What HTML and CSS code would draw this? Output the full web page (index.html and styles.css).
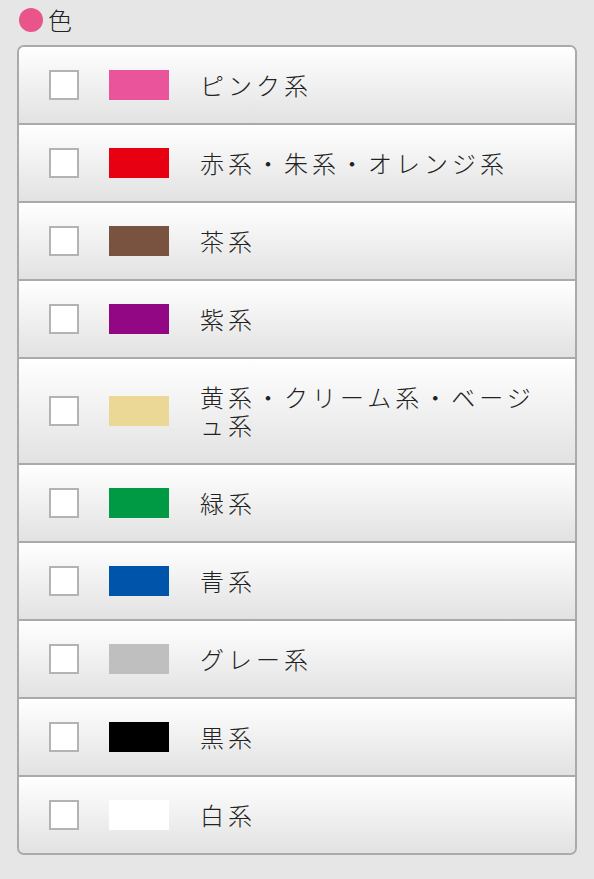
FILE: index.html
```html
<!DOCTYPE html>
<html lang="ja">
<head>
<meta charset="utf-8">
<link rel="stylesheet" href="styles.css">
</head>
<body>
<div class="head"><span class="dot"></span><span class="title">色</span></div>
<ul class="list">
  <li class="row"><span class="cb"></span><span class="sw" style="background:#e9549a"></span><span class="label">ピンク系</span></li>
  <li class="row"><span class="cb"></span><span class="sw" style="background:#e60012"></span><span class="label">赤系・朱系・オレンジ系</span></li>
  <li class="row"><span class="cb"></span><span class="sw" style="background:#7a5340"></span><span class="label">茶系</span></li>
  <li class="row"><span class="cb"></span><span class="sw" style="background:#920783"></span><span class="label">紫系</span></li>
  <li class="row"><span class="cb"></span><span class="sw" style="background:#ecd896"></span><span class="label">黄系・クリーム系・ベージュ系</span></li>
  <li class="row"><span class="cb"></span><span class="sw" style="background:#009944"></span><span class="label">緑系</span></li>
  <li class="row"><span class="cb"></span><span class="sw" style="background:#0055aa"></span><span class="label">青系</span></li>
  <li class="row"><span class="cb"></span><span class="sw" style="background:#bfbfbf"></span><span class="label">グレー系</span></li>
  <li class="row"><span class="cb"></span><span class="sw" style="background:#000000"></span><span class="label">黒系</span></li>
  <li class="row"><span class="cb"></span><span class="sw" style="background:#ffffff"></span><span class="label">白系</span></li>
</ul>
</body>
</html>
```
FILE: styles.css
```css
html, body {
  margin: 0;
  padding: 0;
  background: #e6e6e6;
}
body {
  padding: 8px 17px 0 17px;
  font-family: "Noto Sans CJK JP", "Noto Sans", sans-serif;
  color: #222;
}
.head {
  display: flex;
  align-items: center;
  height: 24px;
  margin-bottom: 13px;
}
.dot {
  width: 24px;
  height: 24px;
  border-radius: 50%;
  background: #e9558a;
  margin-left: 2px;
  margin-right: 5px;
}
.title {
  font-size: 24px;
  line-height: 24px;
  font-weight: 300;
}
.list {
  list-style: none;
  margin: 0;
  padding: 0;
  width: 556px;
  border: 2px solid #aaaaaa;
  border-radius: 7px;
  overflow: hidden;
}
.row {
  display: flex;
  align-items: center;
  background: linear-gradient(#ffffff, #e2e2e2);
  border-top: 2px solid #aaaaaa;
}
.row:first-child {
  border-top: none;
}
.cb {
  flex: none;
  box-sizing: border-box;
  width: 30px;
  height: 30px;
  border: 2px solid #b3b3b3;
  background: #fff;
  margin-left: 30px;
}
.sw {
  flex: none;
  width: 60px;
  height: 30px;
  margin-left: 30px;
}
.label {
  margin-left: 31px;
  width: 345px;
  padding: 24px 0;
  font-size: 24px;
  line-height: 28px;
  letter-spacing: 4px;
  font-weight: 300;
}
```
